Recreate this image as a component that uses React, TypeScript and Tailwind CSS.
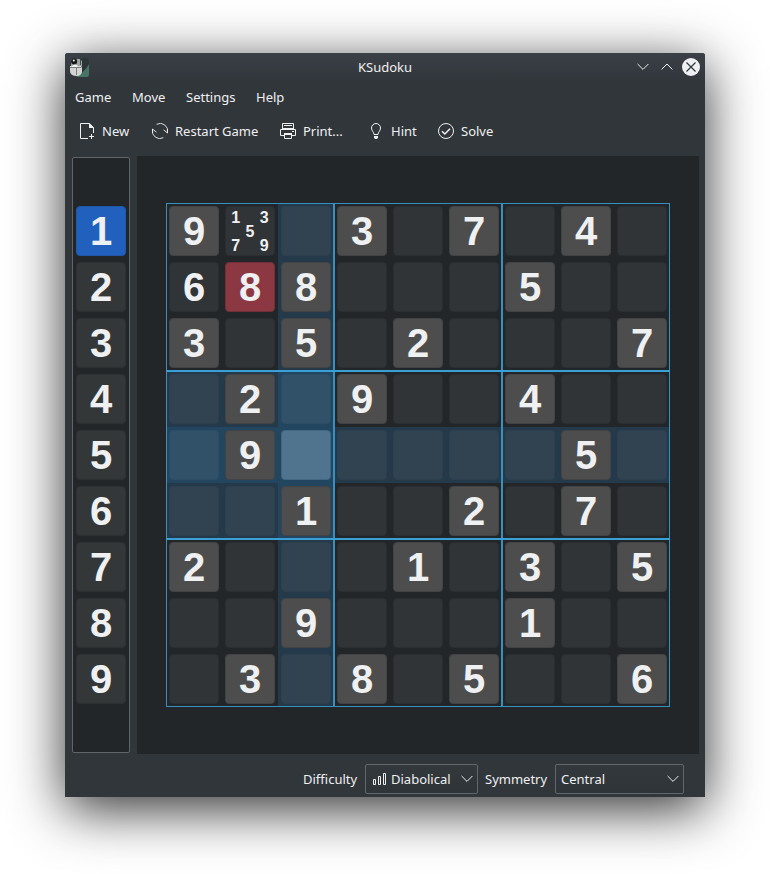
const BOARD = ["9..3.7.4.", "688...5..", "3.5.2...7", ".2.9..4..", ".9.....5.", "..1..2.7.", "2...1.3.5", "..9...1..", ".3.8.5..6"];

const DIGIT = "font-['Liberation_Sans',Arial,sans-serif] font-bold";

function Cell({ r, c }: { r: number; c: number }) {
  const v = BOARD[r][c];
  const hits = (r === 4 ? 1 : 0) + (c === 2 ? 1 : 0) + (r >= 3 && r < 6 && c < 3 ? 1 : 0);
  const current = r === 4 && c === 2;
  const user = (r === 0 && c === 1) || (r === 1 && c === 0);
  const wrong = r === 1 && c === 1;
  const given = v !== "." && !user && !wrong;
  const slot = hits === 0 ? "" : hits === 1 ? "bg-[#243949]" : "bg-[#22465f]";
  const tile = wrong
    ? "bg-[#8b3842] border-[#722f38]"
    : given
      ? "bg-[#4d4d4d] border-[#424344]"
      : current
        ? "bg-[#50738e] border-[#416783]"
        : hits > 1
          ? "bg-[#315168] border-[#2b4d65]"
          : hits === 1
            ? "bg-[#314351] border-[#2c404f]"
            : "bg-[#313437] border-[#2b2e31]";
  return (
    <div className={`flex h-14 w-14 items-center justify-center ${slot}`}>
      <div className={`flex h-[50px] w-[50px] items-center justify-center rounded-[4px] border ${tile}`}>
        {r === 0 && c === 1 ? (
          <div className={`mt-[2px] grid h-[43px] w-[43px] grid-cols-3 grid-rows-3 place-items-center text-[16px] leading-none ${DIGIT}`}>
            <span>1</span><span /><span>3</span>
            <span /><span>5</span><span />
            <span>7</span><span /><span>9</span>
          </div>
        ) : v !== "." ? (
          <span className={`text-[40px] leading-[48px] ${DIGIT}`}>{v}</span>
        ) : null}
      </div>
    </div>
  );
}

function Chevron({ up = false }: { up?: boolean }) {
  return (
    <svg className="shrink-0" width="12" height="8" viewBox="0 0 12 8" fill="none" stroke="#eff0f1" strokeWidth="1">
      <path d={up ? "M.6 6.4 6 1 11.4 6.4" : "M.6 1 6 6.4 11.4 1"} />
    </svg>
  );
}

function AppIcon() {
  return (
    <svg className="ml-[5px] shrink-0" width="19" height="20" viewBox="0 0 19 20">
      <path d="M12 0h3q4 0 4 5v3L9 18V4Z" fill="#2c3435" />
      <path d="M19 6v11q0 2-2 2H8q-1 0-2-1 8-3 13-12Z" fill="#457565" />
      <path d="M0 8h11l1 1v5q-1 4-5 4-7 0-7-5Z" fill="#d4d4d4" />
      <path d="M1 7 2 1h8l2 2v5H1Z" fill="#a2a5a4" />
      <circle cx="4.2" cy="3.4" r="3" fill="#161919" />
      <circle cx="3.8" cy="2.4" r="1" fill="#eee" />
      <path d="M2 8q3-3 6 0l-1 1H2Z" fill="#f2f2f2" />
      <path d="M0 9.5h11.5M6.5 10v7" stroke="#6a6a6a" strokeWidth=".8" />
      <path d="M10.5 1v6" stroke="#40484a" />
    </svg>
  );
}

const ICON = { className: "shrink-0", width: 16, height: 16, viewBox: "0 0 16 16", fill: "none", stroke: "#eff0f1" };

export default function App() {
  return (
    <div className="flex h-[874px] w-[770px] items-start overflow-hidden bg-white pt-[53px] pl-[65px] font-['Noto_Sans',sans-serif] text-[13px] text-[#eff0f1]">
      <div className="flex h-[744px] w-[640px] flex-col rounded-t-[3px] bg-[#31363b] shadow-[0_12px_54px_rgba(0,0,0,0.82)]">
        <header className="flex h-[29px] shrink-0 items-center rounded-t-[3px] bg-linear-to-b from-[#3b4047] to-[#31363b]">
          <AppIcon />
          <div className="ml-[24px] w-[544px] pb-px text-center leading-[18px]">KSudoku</div>
          <div className="-mt-[2px] ml-[-20px] flex items-center">
            <Chevron />
            <div className="ml-[12px] flex"><Chevron up /></div>
            <svg className="ml-[8px]" width="20" height="20" viewBox="0 0 20 20">
              <circle cx="10" cy="10" r="9" fill="#eff0f1" />
              <path d="m5.5 5.5 9 9m0-9-9 9" stroke="#31363b" strokeWidth="1.2" />
            </svg>
          </div>
        </header>
        <nav className="flex h-[30px] shrink-0 items-center pl-[10px] leading-[18px]">
          <span className="w-[57px]">Game</span>
          <span className="w-[54px]">Move</span>
          <span className="w-[70px]">Settings</span>
          <span>Help</span>
        </nav>
        <div className="flex h-[44px] shrink-0 items-start pt-[10px] pl-[14px] leading-[18px] whitespace-nowrap">
          <div className="flex w-[73px] items-center gap-[7px]">
            <svg {...ICON}>
              <path d="M9 15.5H1.5V.5h9l4 4V10" />
              <path d="M10 0v5h5Z" fill="#eff0f1" stroke="none" />
              <path d="M12.5 11v5M10 13.5h5" />
            </svg>
            New
          </div>
          <div className="flex w-[128px] items-center gap-[7px]">
            <svg {...ICON}>
              <g strokeWidth=".9">
                <path d="M4.6 1.3A7.5 7.5 0 0 1 15.5 9.5M11.5 6.8l4 3.2V6" />
                <path d="M11.4 14.7A7.5 7.5 0 0 1 .5 6.5M4.5 9.2l-4-3.2v4" />
              </g>
            </svg>
            Restart Game
          </div>
          <div className="flex w-[88px] items-center gap-[7px]">
            <svg {...ICON}>
              <path d="M2.5 5V.5h11V5M4 2.5h8M2 5.5h12M4 12.5H.5v-6h15v6H12M4.5 10.5h7v5h-7ZM12 8.5h2" />
              <path d="M4 10h8v2H4Z" fill="#eff0f1" stroke="none" />
            </svg>
            Print...
          </div>
          <div className="flex w-[70px] items-center gap-[7px]">
            <svg {...ICON}>
              <path d="M6 11.5C6 9 3.5 8 3.5 5a4.5 4.5 0 0 1 9 0c0 3-2.5 4-2.5 6.5Z" />
              <path d="M6 13h4v2l-1 1H7l-1-1Z" fill="#eff0f1" stroke="none" />
            </svg>
            Hint
          </div>
          <div className="flex items-center gap-[7px]">
            <svg {...ICON}>
              <circle cx="8" cy="8" r="7.5" />
              <path d="m4 8.3 2.8 2.7L12 5.7" strokeWidth="1.5" />
            </svg>
            Solve
          </div>
        </div>
        <main className="flex h-[598px] shrink-0 items-start pl-[7px]">
          <aside className="mt-px flex h-[596px] w-[58px] flex-col items-center gap-[6px] rounded-[2px] border border-[#616569] bg-[#232629] pt-[48px]">
            {[1, 2, 3, 4, 5, 6, 7, 8, 9].map((n) => (
              <div
                key={n}
                className={`flex h-[50px] w-[50px] shrink-0 items-center justify-center rounded-[4px] border text-[40px] leading-[48px] ${DIGIT} ${n === 1 ? "border-[#2058a7] bg-[#2160bd]" : "border-[#2d3031] bg-[#343738]"}`}
              >
                {n}
              </div>
            ))}
          </aside>
          <section className="ml-[7px] flex h-[598px] w-[562px] items-start bg-[#232629] pt-[47px] pl-[29px]">
            <div className="relative grid h-[504px] w-[504px] shrink-0 grid-cols-9">
              {BOARD.map((row, r) => row.split("").map((_, c) => <Cell key={`${r}-${c}`} r={r} c={c} />))}
              <div className="pointer-events-none absolute inset-0 border border-[#3690c0]" />
              <div className="pointer-events-none absolute inset-y-0 left-[167px] w-[170px] border-x-2 border-[#3690c0]" />
              <div className="pointer-events-none absolute inset-x-0 top-[167px] h-[170px] border-y-2 border-[#3a9fd5]" />
            </div>
          </section>
        </main>
        <footer className="flex h-[43px] shrink-0 items-center pt-[6px] pl-[238px] leading-[18px]">
          <span className="w-[62px]">Difficulty</span>
          <div className="flex h-[30px] w-[113px] items-center rounded-[2px] border border-[#63676b] bg-linear-to-b from-[#33383d] to-[#2f3438] px-[6px]">
            <svg className="shrink-0" width="15" height="14" viewBox="0 0 15 14" fill="none" stroke="#eff0f1">
              <path d="M1.5 7.5h2v5h-2ZM6.5 4.5h2v8h-2ZM11.5 1.5h2v11h-2Z" />
            </svg>
            <span className="ml-[4px] flex-1">Diabolical</span>
            <div className="-mr-[2px] flex"><Chevron /></div>
          </div>
          <span className="ml-[7px] w-[70px]">Symmetry</span>
          <div className="flex h-[30px] w-[129px] items-center rounded-[2px] border border-[#63676b] bg-linear-to-b from-[#33383d] to-[#2f3438] pr-[4px] pl-[5px]">
            <span className="flex-1">Central</span>
            <Chevron />
          </div>
        </footer>
      </div>
    </div>
  );
}
